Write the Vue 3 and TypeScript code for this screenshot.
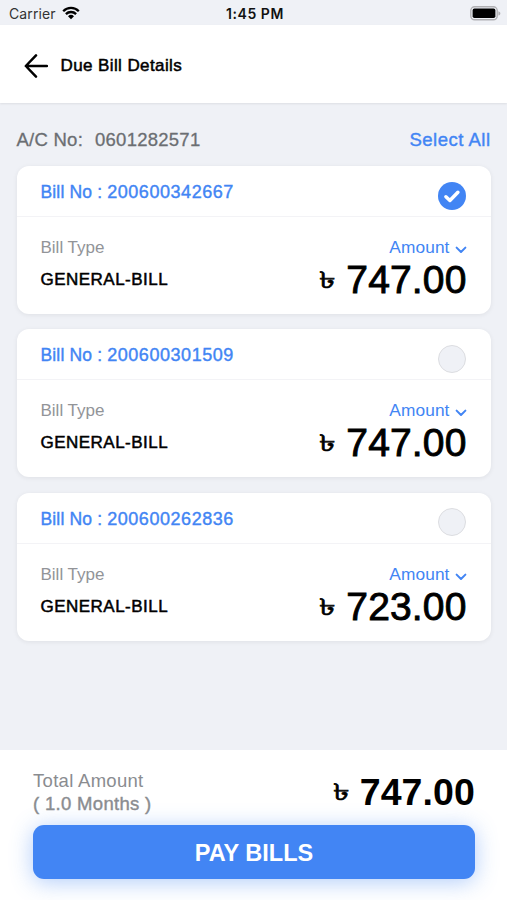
<script setup lang="ts">
import { computed, ref } from 'vue'

interface Bill {
  no: string
  type: string
  amount: number
  selected: boolean
}

const bills = ref<Bill[]>([
  { no: '200600342667', type: 'GENERAL-BILL', amount: 747, selected: true },
  { no: '200600301509', type: 'GENERAL-BILL', amount: 747, selected: false },
  { no: '200600262836', type: 'GENERAL-BILL', amount: 723, selected: false },
])

const selectedBills = computed(() => bills.value.filter((b) => b.selected))
const total = computed(() => selectedBills.value.reduce((sum, b) => sum + b.amount, 0))
const months = computed(() => selectedBills.value.length.toFixed(1))

function selectAll(): void {
  bills.value.forEach((b) => (b.selected = true))
}
</script>

<template>
  <div class="screen">
    <div class="status">
      <div class="carrier">
        <span>Carrier</span>
        <svg class="wifi" viewBox="0 0 18 14">
          <path d="M1.2 5.2a11 11 0 0 1 15.6 0M3.9 8.1a7.2 7.2 0 0 1 10.2 0" />
          <path class="dot" d="M9 13.2 6 10.2a4.3 4.3 0 0 1 6 0z" />
        </svg>
      </div>
      <span class="clock">1:45 PM</span>
      <svg class="battery" viewBox="0 0 31 15">
        <rect class="shell" x="0.8" y="0.8" width="26.4" height="13" rx="3.8" />
        <rect x="2.6" y="2.6" width="22.8" height="9.4" rx="1.8" />
        <path class="cap" d="M28.4 5.2c2.6 1 2.6 3.4 0 4.4z" />
      </svg>
    </div>

    <header class="header">
      <svg class="back" viewBox="0 0 24 24"><path d="M12 1.4 1.8 12l10.2 10.6M2 12H23" /></svg>
      <h1>Due Bill Details</h1>
    </header>

    <main class="content">
      <div class="account">
        <div class="ac"><span>A/C No:</span><span>0601282571</span></div>
        <button class="select-all" @click="selectAll">Select All</button>
      </div>

      <section v-for="bill in bills" :key="bill.no" class="card">
        <div class="card-head">
          <span class="bill-no"><span>Bill No :</span><span class="digits">{{ bill.no }}</span></span>
          <button class="check" :class="{ on: bill.selected }" @click="bill.selected = !bill.selected">
            <svg v-if="bill.selected" viewBox="0 0 28 28"><path d="m7.9 14.8 4 3.7 8-8.2" /></svg>
          </button>
        </div>
        <div class="card-body">
          <div class="kind">
            <div class="kind-label">Bill Type</div>
            <div class="kind-value">{{ bill.type }}</div>
          </div>
          <div class="sum">
            <div class="sum-label">
              <span>Amount</span>
              <svg viewBox="0 0 12 8"><path d="m1.6 1.6 4.4 4.4 4.4-4.4" /></svg>
            </div>
            <div class="sum-value"><span class="taka">৳</span><span class="number">{{ bill.amount.toFixed(2) }}</span></div>
          </div>
        </div>
      </section>
    </main>

    <footer class="footer">
      <div class="total">
        <div class="total-label">
          <div class="caption">Total Amount</div>
          <div class="months">( {{ months }} Months )</div>
        </div>
        <div class="total-value"><span class="taka">৳</span><span class="number">{{ total.toFixed(2) }}</span></div>
      </div>
      <button class="pay">PAY BILLS</button>
    </footer>
  </div>
</template>

<style>
body {
  background: #eff1f6;
}
</style>

<style scoped>
.screen {
  width: 507px;
  height: 900px;
  box-sizing: border-box;
  display: flex;
  flex-direction: column;
  overflow: hidden;
  background: #eff1f6;
  color: #000;
  font-family: 'Liberation Sans', Arial, sans-serif;
}
button {
  border: 0;
  padding: 0;
  margin: 0;
  background: none;
  font: inherit;
  color: inherit;
  cursor: pointer;
}
svg {
  display: block;
  fill: none;
  stroke-linecap: round;
  stroke-linejoin: round;
}
.status {
  flex: none;
  height: 25px;
  display: grid;
  grid-template-columns: 1fr auto 1fr;
  align-items: center;
  padding: 2px 6px 0 9px;
  box-sizing: border-box;
  font-family: Inter, sans-serif;
  font-size: 14px;
}
.carrier {
  display: flex;
  align-items: center;
  gap: 6px;
  color: #333;
  letter-spacing: 0.1px;
}
.wifi {
  width: 18px;
  height: 14px;
  margin-top: -1px;
  stroke: #000;
  stroke-width: 2.3;
  stroke-linecap: butt;
}
.wifi .dot {
  fill: #000;
  stroke: none;
}
.clock {
  font-weight: 600;
  letter-spacing: 0.55px;
  color: #111;
}
.battery {
  width: 31px;
  height: 15px;
  margin-top: -1px;
  justify-self: end;
  fill: #000;
}
.battery .shell {
  fill: none;
  stroke: #b0b0b3;
  stroke-width: 1.4;
}
.battery .cap {
  fill: #b0b0b3;
}
.header {
  flex: none;
  height: 78px;
  background: #fff;
  display: flex;
  align-items: center;
  gap: 12.5px;
  padding: 3px 24px 0;
  box-sizing: border-box;
  box-shadow: 0 1px 2px rgba(0, 0, 0, 0.08);
}
.back {
  width: 24px;
  height: 24px;
  stroke: #000;
  stroke-width: 2.5;
}
h1 {
  margin: 0;
  font-size: 17px;
  font-weight: 400;
  letter-spacing: 0.4px;
  -webkit-text-stroke: 0.5px #000;
}
.content {
  flex: 1;
  padding: 26px 16.5px 0;
}
.account {
  display: flex;
  justify-content: space-between;
  height: 37px;
  line-height: 22px;
}
.ac {
  display: flex;
  gap: 12px;
  font-size: 18.5px;
  letter-spacing: 0.25px;
  color: #6b6e72;
  -webkit-text-stroke: 0.3px #6b6e72;
}
.select-all {
  height: 22px;
  font-size: 18.5px;
  letter-spacing: 0.5px;
  color: #4285f4;
  -webkit-text-stroke: 0.4px #4285f4;
}
.card {
  height: 148px;
  margin-bottom: 15.4px;
  background: #fff;
  border-radius: 12px;
  box-shadow: 0 1px 5px rgba(0, 0, 0, 0.07);
}
.card-head {
  height: 51px;
  box-sizing: border-box;
  display: flex;
  justify-content: space-between;
  align-items: center;
  padding: 2px 25px 0 24px;
  border-bottom: 1px solid #f3f3f6;
}
.bill-no {
  display: flex;
  gap: 5px;
  margin-top: 1px;
  font-size: 17.5px;
  letter-spacing: 0.15px;
  color: #4285f4;
  -webkit-text-stroke: 0.4px #4285f4;
}
.digits {
  font-size: 18px;
  letter-spacing: 0.55px;
}
.check {
  width: 28px;
  height: 28px;
  margin-top: 7px;
  box-sizing: border-box;
  border-radius: 50%;
  background: #eff1f6;
  border: 1px solid #dcdde1;
}
.check.on {
  border: 0;
  background: #4285f4;
}
.check svg {
  width: 28px;
  height: 28px;
  stroke: #fff;
  stroke-width: 3.5;
}
.card-body {
  display: flex;
  justify-content: space-between;
  padding: 20px 24px 0;
}
.kind-label {
  font-size: 17px;
  line-height: 21px;
  color: #929498;
}
.kind-value {
  margin-top: 12px;
  font-size: 17px;
  line-height: 20px;
  letter-spacing: 0.48px;
  -webkit-text-stroke: 0.5px #000;
}
.sum-label {
  display: flex;
  justify-content: flex-end;
  gap: 5px;
  font-size: 17.3px;
  line-height: 21px;
  letter-spacing: 0.1px;
  color: #4285f4;
}
.sum-label svg {
  width: 12px;
  height: 8px;
  margin-top: 9px;
  stroke: #4285f4;
  stroke-width: 2;
}
.sum-value,
.total-value {
  display: flex;
  gap: 12px;
}
.sum-value {
  font-size: 39px;
  line-height: 44px;
  letter-spacing: 0.15px;
  -webkit-text-stroke: 0.9px #000;
}
.taka {
  width: 15px;
  font-size: 23px;
  font-weight: 400;
  letter-spacing: 0;
  transform: scaleX(1.45);
  transform-origin: left center;
  -webkit-text-stroke: 0.6px #000;
}
.footer {
  flex: none;
  height: 150px;
  box-sizing: border-box;
  padding: 19px 32px 0 33px;
  background: #fff;
}
.total {
  display: flex;
  justify-content: space-between;
}
.total-label {
  font-size: 18.5px;
  line-height: 23px;
  color: #8a8c90;
}
.caption {
  letter-spacing: 0.3px;
}
.months {
  margin-top: -0.5px;
  letter-spacing: 0.32px;
  -webkit-text-stroke: 0.4px #8a8c90;
}
.total-value {
  font-size: 37.5px;
  font-weight: 700;
  line-height: 46px;
}
.total-value .number {
  letter-spacing: 0.1px;
}
.pay {
  display: block;
  width: 100%;
  height: 54px;
  margin-top: 10px;
  padding-top: 2px;
  border-radius: 11px;
  background: #4285f4;
  box-shadow: 0 3px 22px rgba(66, 133, 244, 0.42);
  color: #fff;
  font-size: 23.5px;
  font-weight: 700;
}
</style>
